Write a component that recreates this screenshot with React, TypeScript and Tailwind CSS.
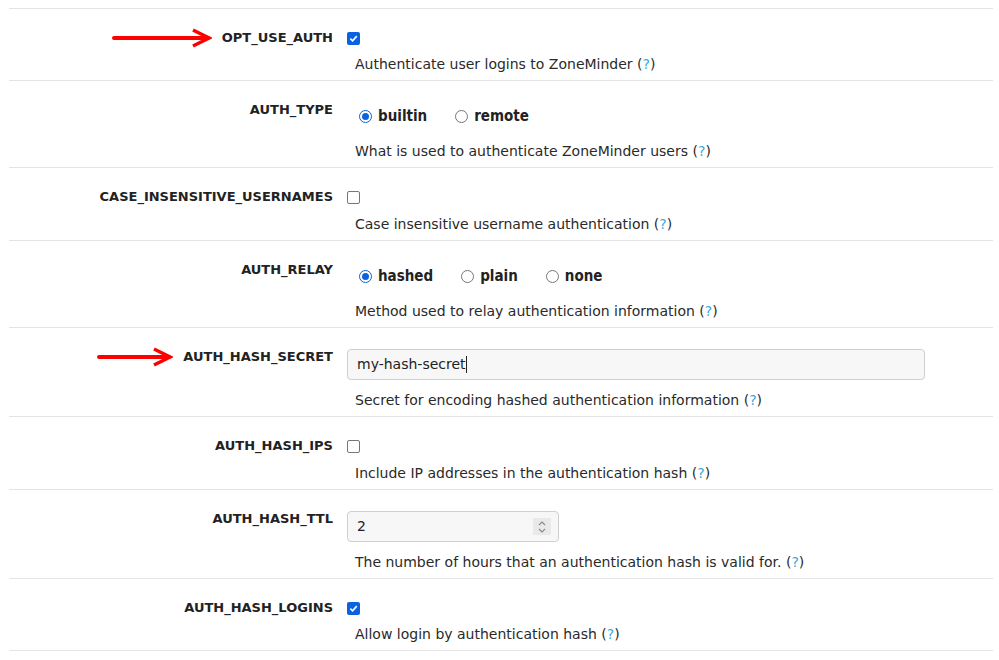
import React from 'react';

const font = { fontFamily: '"DejaVu Sans", sans-serif' };
const cond = { fontFamily: '"DejaVu Sans Condensed", "DejaVu Sans", sans-serif' };

const Arrow: React.FC<{ w: number }> = ({ w }) => (
  <svg width={w} height="22" viewBox={`0 0 ${w} 22`} className="mr-[10px] shrink-0">
    <line x1="2" y1="11" x2={w - 4} y2="11" stroke="#f00" strokeWidth="4" strokeLinecap="round" />
    <polyline points={`${w - 19},3 ${w - 3},11 ${w - 19},19`} fill="none" stroke="#f00" strokeWidth="3.5" strokeLinejoin="miter" />
  </svg>
);

const Help = () => (
  <>
    (<span className="text-[#3aa8e0]">?</span>)
  </>
);

const Checkbox: React.FC<{ checked?: boolean }> = ({ checked }) =>
  checked ? (
    <span className="w-[13px] h-[13px] rounded-[2px] bg-[#0b62e0] flex items-center justify-center">
      <svg width="9" height="9" viewBox="0 0 10 10">
        <polyline points="1.5,5.2 4,7.6 8.6,2.4" fill="none" stroke="#fff" strokeWidth="1.8" />
      </svg>
    </span>
  ) : (
    <span className="w-[13px] h-[13px] rounded-[2px] border border-[#767676] bg-white" />
  );

const Radios: React.FC<{ options: string[]; value: string }> = ({ options, value }) => (
  <div className="flex items-center h-6 mt-[2px] pl-[12px] gap-[28px]" style={cond}>
    {options.map((o) => (
      <label key={o} className="flex items-center gap-[6px] text-[15px] font-bold text-[#222]">
        {o === value ? (
          <span className="w-[13px] h-[13px] rounded-full border-[1.5px] border-[#0b62e0] flex items-center justify-center">
            <span className="w-[7px] h-[7px] rounded-full bg-[#0b62e0]" />
          </span>
        ) : (
          <span className="w-[13px] h-[13px] rounded-full border-[1.5px] border-[#767676] bg-white" />
        )}
        {o}
      </label>
    ))}
  </div>
);

type Row = {
  name: string;
  arrow?: number;
  control: React.ReactNode;
  desc: string;
  gap: string;
};

const box = (
  <div className="h-4 flex items-center">
    <Checkbox />
  </div>
);
const boxChecked = (
  <div className="h-4 flex items-center">
    <Checkbox checked />
  </div>
);

const rows: Row[] = [
  {
    name: 'OPT_USE_AUTH',
    arrow: 100,
    control: boxChecked,
    desc: 'Authenticate user logins to ZoneMinder',
    gap: 'mt-2',
  },
  {
    name: 'AUTH_TYPE',
    control: <Radios options={['builtin', 'remote']} value="builtin" />,
    desc: 'What is used to authenticate ZoneMinder users',
    gap: 'mt-[13px]',
  },
  {
    name: 'CASE_INSENSITIVE_USERNAMES',
    control: box,
    desc: 'Case insensitive username authentication',
    gap: 'mt-[9px]',
  },
  {
    name: 'AUTH_RELAY',
    control: <Radios options={['hashed', 'plain', 'none']} value="hashed" />,
    desc: 'Method used to relay authentication information',
    gap: 'mt-[13px]',
  },
  {
    name: 'AUTH_HASH_SECRET',
    arrow: 76,
    control: (
      <div className="w-[578px] h-[31px] rounded-[4px] border border-[#cfcfcf] bg-[#f7f7f7] flex items-center px-[9px] text-[14px] text-[#222]">
        my-hash-secret
        <span className="w-px h-[17px] bg-[#222]" />
      </div>
    ),
    desc: 'Secret for encoding hashed authentication information',
    gap: 'mt-[10px]',
  },
  {
    name: 'AUTH_HASH_IPS',
    control: box,
    desc: 'Include IP addresses in the authentication hash',
    gap: 'mt-[9px]',
  },
  {
    name: 'AUTH_HASH_TTL',
    control: (
      <div className="w-[212px] h-[31px] rounded-[4px] border border-[#cfcfcf] bg-[#f7f7f7] flex items-center justify-between pl-[9px] pr-[7px] text-[14px] text-[#222]">
        2
        <span className="w-[18px] h-[17px] bg-[#e9e9e9] flex items-center justify-center">
          <svg width="10" height="14" viewBox="0 0 10 14">
            <polyline points="2,5 5,2 8,5" fill="none" stroke="#888" strokeWidth="1.1" />
            <polyline points="2,9 5,12 8,9" fill="none" stroke="#888" strokeWidth="1.1" />
          </svg>
        </span>
      </div>
    ),
    desc: 'The number of hours that an authentication hash is valid for.',
    gap: 'mt-[10px]',
  },
  {
    name: 'AUTH_HASH_LOGINS',
    control: boxChecked,
    desc: 'Allow login by authentication hash',
    gap: 'mt-2',
  },
];

export default function App() {
  return (
    <div className="min-h-screen bg-white pt-[8px] pl-[9px] pr-[6px]" style={font}>
      <div className="border-b border-[#e4e4e4]">
        {rows.map((r) => (
          <div key={r.name} className="flex border-t border-[#e4e4e4] pt-[21px] pb-[6px]">
            <div className="w-[324px] shrink-0 flex items-center justify-end h-4">
              {r.arrow && <Arrow w={r.arrow} />}
              <span className="text-[13px] font-bold text-[#222] leading-4">{r.name}</span>
            </div>
            <div className="ml-[14px] flex flex-col">
              {r.control}
              <div className={`${r.gap} pl-2 text-[14px] leading-5 text-[#2a2a2a]`}>
                {r.desc} <Help />
              </div>
            </div>
          </div>
        ))}
      </div>
    </div>
  );
}
